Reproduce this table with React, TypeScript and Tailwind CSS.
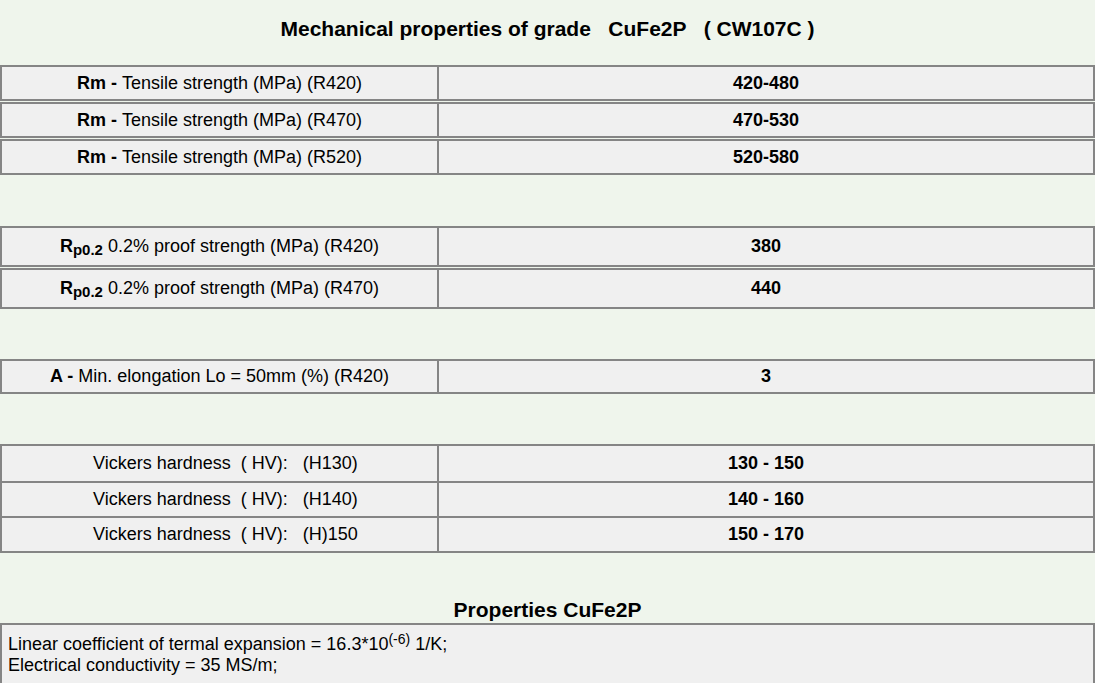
import React from "react";

const font = { fontFamily: '"Liberation Sans", Arial, sans-serif' };

function Row({ left, right, h, first }: { left: React.ReactNode; right: string; h: string; first?: boolean }) {
  return (
    <div className={`flex border-2 border-[#858585] bg-[#f0f0f0] ${h} ${first ? "" : "mt-px"}`}>
      <div className="w-[437px] shrink-0 flex items-center justify-center border-r-2 border-[#858585] whitespace-pre">{left}</div>
      <div className="flex-1 flex items-center justify-center font-bold">{right}</div>
    </div>
  );
}

function VRow({ left, right, top }: { left: string; right: string; top?: boolean }) {
  return (
    <div className={`flex h-[35px] ${top ? "border-t-2 border-[#858585]" : ""}`}>
      <div className="w-[437px] shrink-0 flex items-center justify-center pl-[12px] border-r-2 border-[#858585] whitespace-pre">{left}</div>
      <div className="flex-1 flex items-center justify-center font-bold">{right}</div>
    </div>
  );
}

const Rm = ({ r }: { r: string }) => (
  <span>
    <b>Rm - </b>Tensile strength (MPa) ({r})
  </span>
);

const Rp = ({ r }: { r: string }) => (
  <span>
    <b>R</b>
    <sub className="font-bold text-[15px] relative top-[3px] align-baseline">p0.2</sub> 0.2% proof strength (MPa) ({r})
  </span>
);

export default function App() {
  return (
    <div style={font} className="w-[1095px] h-[683px] overflow-hidden bg-[#eff5ec] text-[18px] text-black leading-[21px]">
      <div className="h-[57px] flex items-center justify-center font-bold text-[21px] whitespace-pre">
        {"Mechanical properties of grade   CuFe2P   ( CW107C )"}
      </div>
      <div className="mt-[8px]">
        <Row first h="h-[36px]" left={<Rm r="R420" />} right="420-480" />
        <Row h="h-[36px]" left={<Rm r="R470" />} right="470-530" />
        <Row h="h-[36px]" left={<Rm r="R520" />} right="520-580" />
      </div>
      <div className="mt-[51px]">
        <Row first h="h-[41px]" left={<Rp r="R420" />} right="380" />
        <Row h="h-[41px]" left={<Rp r="R470" />} right="440" />
      </div>
      <div className="mt-[50px]">
        <Row
          first
          h="h-[35px]"
          left={
            <span>
              <b>A - </b>Min. elongation Lo = 50mm (%) (R420)
            </span>
          }
          right="3"
        />
      </div>
      <div className="mt-[50px] border-2 border-[#858585] bg-[#f0f0f0]">
        <VRow left={"Vickers hardness  ( HV):   (H130)"} right="130 - 150" />
        <VRow top left={"Vickers hardness  ( HV):   (H140)"} right="140 - 160" />
        <VRow top left={"Vickers hardness  ( HV):   (H)150"} right="150 - 170" />
      </div>
      <div className="mt-[43px] h-[27px] flex items-center justify-center font-bold text-[21px]">Properties CuFe2P</div>
      <div className="border-2 border-[#858585] bg-[#f0f0f0] px-[6px] pt-[9px] pb-[10px] h-[80px]">
        <div>
          Linear coefficient of termal expansion = 16.3*10
          <sup className="text-[14px] relative -top-[6px] align-baseline">(-6)</sup> 1/K;
        </div>
        <div>Electrical conductivity = 35 MS/m;</div>
      </div>
    </div>
  );
}
